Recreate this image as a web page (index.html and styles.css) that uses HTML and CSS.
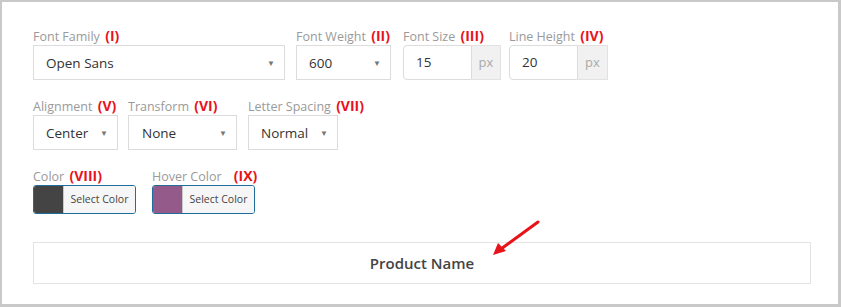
FILE: index.html
```html
<!DOCTYPE html>
<html>
<head>
<meta charset="utf-8">
<link rel="stylesheet" href="styles.css">
</head>
<body>
<div class="frame">
  <div class="row">
    <div class="field w-family">
      <div class="label">Font Family <span class="num">(I)</span></div>
      <div class="select sel-family"><span>Open Sans</span><span class="caret">▼</span></div>
    </div>
    <div class="field w-weight">
      <div class="label">Font Weight <span class="num">(II)</span></div>
      <div class="select sel-weight"><span>600</span><span class="caret">▼</span></div>
    </div>
    <div class="field w-size">
      <div class="label">Font Size <span class="num">(III)</span></div>
      <div class="group"><div class="input">15</div><div class="addon">px</div></div>
    </div>
    <div class="field w-lh">
      <div class="label">Line Height <span class="num">(IV)</span></div>
      <div class="group"><div class="input">20</div><div class="addon addon-wide">px</div></div>
    </div>
  </div>
  <div class="row">
    <div class="field w-align">
      <div class="label">Alignment <span class="num">(V)</span></div>
      <div class="select sel-align"><span>Center</span><span class="caret">▼</span></div>
    </div>
    <div class="field w-transform">
      <div class="label">Transform <span class="num">(VI)</span></div>
      <div class="select sel-transform"><span>None</span><span class="caret">▼</span></div>
    </div>
    <div class="field">
      <div class="label">Letter Spacing <span class="num">(VII)</span></div>
      <div class="select sel-spacing"><span>Normal</span><span class="caret">▼</span></div>
    </div>
  </div>
  <div class="row row-last">
    <div class="field w-color">
      <div class="label">Color <span class="num">(VIII)</span></div>
      <div class="colorbtn"><span class="swatch dark"></span><span class="colortext">Select Color</span></div>
    </div>
    <div class="field">
      <div class="label">Hover Color <span class="num num-gap">(IX)</span></div>
      <div class="colorbtn"><span class="swatch purple"></span><span class="colortext">Select Color</span></div>
    </div>
  </div>
  <div class="preview">Product Name</div>
  <svg class="arrow" width="60" height="50" viewBox="0 0 60 50">
    <line x1="51" y1="4" x2="14" y2="31" stroke="#e8121a" stroke-width="3" stroke-linecap="round"/>
    <polygon points="6,37 11,25 19,33" fill="#e8121a"/>
  </svg>
</div>
</body>
</html>
```

FILE: styles.css
```css
* { box-sizing: border-box; }
html, body { margin: 0; padding: 0; background: #fff; }
body { font-family: "Open Sans", "Noto Sans", sans-serif; }

.frame {
  position: relative;
  width: 841px;
  height: 307px;
  border: 2px solid #c9c9c9;
  border-bottom-width: 3px;
  border-right-width: 3px;
  padding: 25px 29px 0 31px;
}

.row {
  display: flex;
  align-items: flex-start;
  margin-bottom: 17px;
}
.row-last { margin-bottom: 0; }

.field { display: flex; flex-direction: column; }
.w-family { width: 263px; }
.w-weight { width: 107px; }
.w-size { width: 106px; }
.w-align { width: 95px; }
.w-transform { width: 120px; }
.w-color { width: 119px; }

.label {
  height: 18px;
  line-height: 18px;
  font-size: 12.5px;
  color: #9a9a9a;
  white-space: nowrap;
}
.num {
  color: #e8121a;
  font-weight: 700;
  font-size: 14px;
  margin-left: 2px;
}
.num-gap { margin-left: 9px; }

.select {
  height: 35px;
  border: 1px solid #dcdcdc;
  background: #fff;
  display: flex;
  align-items: center;
  justify-content: space-between;
  padding: 0 9px 0 12px;
  font-size: 13.5px;
  color: #333;
}
.caret { font-size: 8px; color: #777; }
.sel-family { width: 252px; }
.sel-weight { width: 95px; }
.sel-align { width: 85px; }
.sel-transform { width: 109px; padding-left: 13px; }
.sel-spacing { width: 90px; }

.group { display: flex; height: 35px; }
.input {
  width: 69px;
  height: 35px;
  border: 1px solid #dcdcdc;
  border-radius: 4px 0 0 4px;
  padding-left: 12px;
  line-height: 33px;
  font-size: 13.5px;
  color: #333;
}
.addon {
  width: 29px;
  height: 35px;
  background: #f1f1f1;
  border: 1px solid #e2e2e2;
  border-left: none;
  text-align: center;
  line-height: 33px;
  font-size: 13px;
  color: #a9a9a9;
}
.addon-wide { width: 30px; }

.colorbtn {
  display: flex;
  width: 103px;
  height: 29px;
  border: 1px solid #1f6d9c;
  border-radius: 3px;
  overflow: hidden;
}
.swatch { width: 30px; height: 100%; border-right: 1px solid #c9c9c9; }
.dark { background: #444444; }
.purple { background: #935a8a; }
.colortext {
  flex: 1;
  background: #f6f6f6;
  font-size: 10.5px;
  color: #444;
  line-height: 27px;
  text-align: center;
}

.preview {
  margin-top: 28px;
  width: 778px;
  height: 42px;
  border: 1px solid #e3e3e3;
  text-align: center;
  line-height: 40px;
  font-size: 15px;
  font-weight: 600;
  color: #444;
}

.arrow {
  position: absolute;
  left: 485px;
  top: 216px;
}
```
